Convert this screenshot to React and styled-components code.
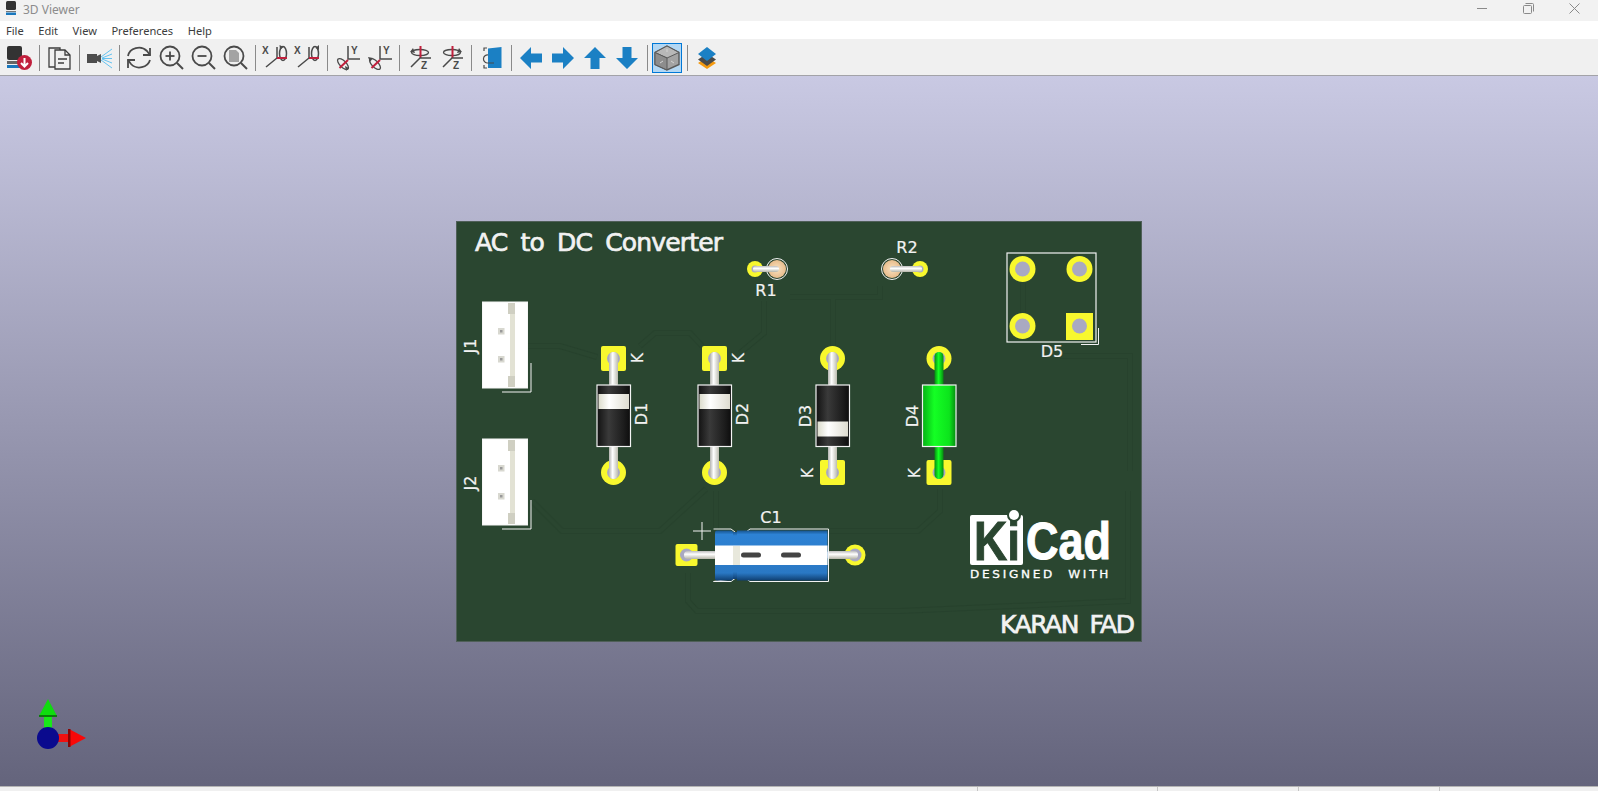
import styled, { createGlobalStyle } from 'styled-components';

const GlobalStyle = createGlobalStyle`
	html, body, #root {
		margin: 0;
		padding: 0;
		height: 100%;
		overflow: hidden;
	}
	body {
		font-family: 'Noto Sans', 'Open Sans', sans-serif;
	}
`;

const Window = styled.div`
	display: flex;
	flex-direction: column;
	width: 1598px;
	height: 791px;
	background: #f0f0f0;
`;

const TitleBar = styled.div`
	display: flex;
	align-items: flex-start;
	height: 21px;
	flex: none;
	background: #f2f2f2;
`;

const AppIcon = styled.svg`
	width: 14px;
	height: 16px;
	margin-left: 4px;
	flex: none;
`;

const TitleText = styled.span`
	margin-left: 5px;
	font-size: 12px;
	line-height: 20px;
	color: #8c8c8c;
`;

const WindowControls = styled.div`
	display: flex;
	margin-left: auto;
	margin-right: 1px;
`;

const WindowButton = styled.div`
	display: flex;
	align-items: center;
	justify-content: center;
	width: 46px;
	height: 16px;
`;

const MenuBar = styled.div`
	display: flex;
	align-items: center;
	gap: 14.5px;
	height: 18px;
	flex: none;
	padding-left: 6px;
	background: #fff;
`;

const MenuItem = styled.span`
	font-size: 11.1px;
	color: #3c3c3c;
`;

const Toolbar = styled.div`
	display: flex;
	align-items: center;
	height: 37px;
	flex: none;
	box-sizing: border-box;
	padding: 2px 0 0 3px;
	background: #f0f0f0;
	border-bottom: 1px solid #a3a3a8;
`;

const ToolButton = styled.div`
	display: flex;
	width: 30px;
	height: 30px;
	margin: 0 1px;
	flex: none;
	box-sizing: border-box;
	background: ${(p) => (p.$active ? '#b3d7f3' : 'transparent')};
	outline: ${(p) => (p.$active ? '1px solid #0078d7' : 'none')};
	outline-offset: -1px;
`;

const ToolIcon = styled.svg`
	width: 30px;
	height: 30px;
`;

const ToolSeparator = styled.div`
	width: 1px;
	height: 26px;
	margin: 0 3.5px;
	flex: none;
	background: #8a8a8a;
`;

const Canvas = styled.div`
	position: relative;
	display: flex;
	align-items: center;
	justify-content: center;
	flex: 1;
	background: linear-gradient(#c9c9e3, #64647c);
`;

const Board = styled.svg`
	display: block;
	width: 686px;
	height: 421px;
`;

const AxisGizmo = styled.svg`
	position: absolute;
	left: 30px;
	bottom: 37px;
	width: 60px;
	height: 54px;
`;

const StatusBar = styled.div`
	display: flex;
	justify-content: flex-end;
	height: 5px;
	flex: none;
	background: #f0f0f0;
	border-top: 1px solid #b4b4b4;
	box-sizing: border-box;
`;

const StatusCell = styled.div`
	width: ${(p) => p.$w}px;
	border-left: 1px solid #c4c4c4;
	flex: none;
`;

const INK = '#4a4a4a';
const BLUE = '#1b80c4';

const SaveIcon = () => (
	<ToolIcon viewBox='0 0 30 30'>
		<rect x='3' y='3' width='15' height='14' rx='2' fill='#333' />
		<rect x='3' y='18' width='15' height='3' fill='#666' />
		<rect x='3' y='22' width='17' height='3' fill='#1a78bd' />
		<circle cx='20.5' cy='19.5' r='7.5' fill='#c1203d' />
		<path d='M20.5 15v8M17 20l3.5 3.5 3.5-3.5' stroke='#fff' strokeWidth='2' fill='none' />
	</ToolIcon>
);

const CopyIcon = () => (
	<ToolIcon viewBox='0 0 30 30'>
		<path d='M11 24H5V5h11v3' fill='none' stroke='#3e3e3e' strokeWidth='1.3' />
		<path d='M11 7h10l5 5v14H11z' fill='#f0f0f0' stroke='#3e3e3e' strokeWidth='1.3' />
		<path d='M21 7v5h5M14 16h9M14 20h6' fill='none' stroke='#3e3e3e' strokeWidth='1.3' />
	</ToolIcon>
);

const CameraIcon = () => (
	<ToolIcon viewBox='0 0 30 30'>
		<rect x='3' y='11' width='10' height='9' fill='#4d4d4d' />
		<path d='M13 13l4-2v9l-4-2z' fill='#4d4d4d' />
		<path d='M17 14L28 6M18 15L28 11M18 15.500h10M18 16l10 4M17 17l11 8' stroke='#55bdf0' strokeWidth='0.9' fill='none' />
	</ToolIcon>
);

const RefreshIcon = () => (
	<ToolIcon viewBox='0 0 30 30'>
		<path d='M4 13a11 10 0 0 1 19-5l3 4M4 17l3 4a11 10 0 0 0 19-4' fill='none' stroke={INK} strokeWidth='1.8' />
		<path d='M26 5v7h-7M4 25v-8h7' fill='none' stroke={INK} strokeWidth='1.8' />
	</ToolIcon>
);

const ZoomIcon = ({ mode }) => (
	<ToolIcon viewBox='0 0 30 30'>
		<circle cx='14' cy='13' r='9.5' fill='none' stroke={INK} strokeWidth='1.8' />
		<path d='M21 20l6 6' stroke={INK} strokeWidth='2' />
		{mode !== 'fit' && <path d='M9.5 13h9' stroke={INK} strokeWidth='1.8' />}
		{mode === 'in' && <path d='M14 8.5v9' stroke={INK} strokeWidth='1.8' />}
		{mode === 'fit' && <path d='M9 7h7l3 3v9H9z' fill='#a3a3a3' />}
	</ToolIcon>
);

const AxisLetter = ({ x, y, children }) => (
	<text x={x} y={y} fontFamily='Liberation Sans' fontWeight='700' fontSize='10' fill={INK}>
		{children}
	</text>
);

const RotateX = ({ flip }) => (
	<ToolIcon viewBox='0 0 30 30'>
		<AxisLetter x='2' y='11'>X</AxisLetter>
		<path d='M6 24l11-9V4' fill='none' stroke={INK} strokeWidth='1.5' />
		<ellipse cx='23' cy='10.500' rx='3.500' ry='7' fill='none' stroke={INK} strokeWidth='1.5' />
		<path d={flip ? 'M27 2v5l-3.500-2z' : 'M19.500 2l4 2-3.500 3z'} fill={INK} />
		<path d='M17 15h10' stroke='#c1203d' strokeWidth='2' />
	</ToolIcon>
);

const RotateY = ({ flip }) => (
	<ToolIcon viewBox='0 0 30 30'>
		<AxisLetter x='19' y='11'>Y</AxisLetter>
		<path d='M16 3v13h12' fill='none' stroke={INK} strokeWidth='1.5' />
		<ellipse cx='11' cy='21' rx='7' ry='3.200' transform='rotate(45 11 21)' fill='none' stroke={INK} strokeWidth='1.3' />
		<path d={flip ? 'M4 14l5 1-3 4z' : 'M14 28l-1-5 4 2z'} fill={INK} />
		<path d='M7.500 25l8.500-8' stroke='#c1203d' strokeWidth='2' />
	</ToolIcon>
);

const RotateZ = ({ flip }) => (
	<ToolIcon viewBox='0 0 30 30'>
		<ellipse cx='16' cy='9.500' rx='8.500' ry='3' fill='none' stroke={INK} strokeWidth='1.3' />
		<path d={flip ? 'M23 5l3 4-5 1z' : 'M9 5L6 9l5 1z'} fill={INK} />
		<path d='M16.500 3v12' stroke='#c1203d' strokeWidth='2' />
		<path d='M7 24l9-9h11' fill='none' stroke={INK} strokeWidth='1.5' />
		<AxisLetter x='17' y='26'>Z</AxisLetter>
	</ToolIcon>
);

const FlipIcon = () => (
	<ToolIcon viewBox='0 0 30 30'>
		<path d='M12 5.500l13.500-1.500v21H12z' fill={BLUE} />
		<path d='M11 5H8v3M8 22v3h3' fill='none' stroke={INK} strokeWidth='1.2' />
		<path d='M12 12a4 4 0 0 0-1 8h7' fill='none' stroke={INK} strokeWidth='1.2' />
	</ToolIcon>
);

const ArrowIcon = ({ angle }) => (
	<ToolIcon viewBox='0 0 30 30'>
		<polygon
			points='4,15 15,4 15,10.500 26,10.500 26,19.500 15,19.500 15,26'
			fill={BLUE}
			transform={`rotate(${angle} 15 15)`}
		/>
	</ToolIcon>
);

const CubeIcon = () => (
	<ToolIcon viewBox='0 0 30 30'>
		<path d='M15 3l12 6.500v12L15 27 3 21.500V9.500z' fill='#a3a3a3' stroke='#5a5a5a' strokeWidth='1.4' />
		<path d='M3 9.500L15 15l12-5.500L15 3z' fill='#b8b8b8' stroke='#5a5a5a' strokeWidth='1' />
		<path d='M15 15v12L3 21.500V9.500z' fill='#8d8d8d' stroke='#5a5a5a' strokeWidth='1' />
		<path d='M15 6v3M11 18l-3 2M19 18l3 2' stroke='#d4d4d4' strokeWidth='1' />
	</ToolIcon>
);

const LayersIcon = () => (
	<ToolIcon viewBox='0 0 30 30'>
		<path d='M15 14.500l9 5.500-9 6-9-6z' fill='#f59a10' />
		<path d='M15 10.500l9 6-9 6.500-9-6.500z' fill='#4a4a4a' />
		<path d='M15 4l9 7-9 7-9-7z' fill={BLUE} />
	</ToolIcon>
);

const toolbarGroups = [
	[<SaveIcon />],
	[<CopyIcon />],
	[<CameraIcon />],
	[<RefreshIcon />, <ZoomIcon mode='in' />, <ZoomIcon mode='out' />, <ZoomIcon mode='fit' />],
	[<RotateX />, <RotateX flip />],
	[<RotateY />, <RotateY flip />],
	[<RotateZ />, <RotateZ flip />],
	[<FlipIcon />],
	[<ArrowIcon angle={0} />, <ArrowIcon angle={180} />, <ArrowIcon angle={90} />, <ArrowIcon angle={270} />],
	[<CubeIcon />],
	[<LayersIcon />],
];

const PAD = '#f8f82e';
const HOLE = '#a9a9c2';
const SILK = '#f2f2f2';
const BOARD = '#2a4630';

const traces = [
	'M528 345L560 345L597 356',
	'M640 345L655 332H690L702 345',
	'M740 352L764 332V300',
	'M532 500L562 530H660L706 488',
	'M716 490V528',
	'M688 572V600L697 610H900L1128 600V490',
	'M940 488V510L918 530H830',
	'M1023 282V312',
	'M880 285V296H790',
	'M833 345V296',
	'M1060 355L1130 355V470',
];

const TraceLayer = () => (
	<g fill='none'>
		{traces.map((d) => (
			<path key={d} d={d} stroke='#27422d' strokeWidth='6' />
		))}
		{traces.map((d) => (
			<path key={d + 'in'} d={d} stroke={BOARD} strokeWidth='4' />
		))}
	</g>
);

const PadHole = ({ x, y, square, size = 25 }) => (
	<>
		{square ? (
			<rect x={x - size / 2} y={y - size / 2} width={size} height={size} rx='2' fill={PAD} />
		) : (
			<circle cx={x} cy={y} r={size / 2} fill={PAD} />
		)}
		<circle cx={x} cy={y} r='6.500' fill={HOLE} />
	</>
);

const Label = ({ x, y, size = 16, rotate, children }) => (
	<text
		x={x}
		y={y}
		fontFamily='DejaVu Sans'
		fontSize={size}
		fill={SILK}
		stroke={SILK}
		strokeWidth='0.2'
		textAnchor='middle'
		transform={rotate ? `rotate(-90 ${x} ${y})` : undefined}
	>
		{children}
	</text>
);

const BoardText = ({ x, y, width, gap, children }) => (
	<text
		x={x}
		y={y}
		fontFamily='DejaVu Sans'
		fontSize='25'
		fill={SILK}
		stroke={SILK}
		strokeWidth='0.7'
		textLength={width}
		wordSpacing={gap}
	>
		{children}
	</text>
);

const Diode = ({ x, kathodeTop, green, band }) => {
	const lead = green ? 'url(#greenLead)' : 'url(#lead)';
	const body = green ? 'url(#greenBody)' : 'url(#darkBody)';
	return (
		<g>
			<PadHole x={x} y={357.5} square={kathodeTop} />
			<PadHole x={x} y={471.5} square={!kathodeTop} />
			<rect x={x - 4.5} y={351} width='9' height='36' rx='4.5' fill={lead} />
			<rect x={x - 4.5} y={442} width='9' height='36' rx='4.5' fill={lead} />
			<rect x={x - 16.5} y='384' width='33.5' height='61.5' fill={body} stroke='#f4f4f4' strokeWidth='1.2' />
			{band && <rect x={x - 15} y={band} width='30.5' height='15' fill='url(#whiteBand)' />}
		</g>
	);
};

const Connector = ({ y }) => (
	<g>
		<rect x='482.500' y={y} width='45' height='86' fill='#fff' stroke='#f6f6f6' />
		<rect x='510' y={y + 4} width='5' height='78' fill='#e2e2d4' />
		<rect x='508' y={y + 1} width='7' height='11' fill='#cfcfc2' />
		<rect x='508' y={y + 74} width='7' height='11' fill='#cfcfc2' />
		<rect x='498' y={y + 26} width='6.500' height='6.500' fill='#d8d8d0' />
		<rect x='500' y={y + 28} width='2.500' height='2.500' fill='#999' />
		<rect x='498' y={y + 54} width='6.500' height='6.500' fill='#d8d8d0' />
		<rect x='500' y={y + 56} width='2.500' height='2.500' fill='#999' />
		<path d={`M502 ${y + 90}H531V${y + 61}`} fill='none' stroke={SILK} strokeWidth='1' />
	</g>
);

const Resistor = ({ padX, bodyX }) => (
	<g>
		<circle cx={padX} cy='268' r='8' fill={PAD} />
		<circle cx={padX} cy='268' r='3.500' fill={HOLE} />
		<circle cx={bodyX} cy='268' r='10.500' fill='none' stroke={SILK} strokeWidth='1' />
		<circle cx={bodyX} cy='268' r='9' fill='url(#tanBody)' />
		<rect
			x={Math.min(padX, bodyX) - 2}
			y='265'
			width={Math.abs(padX - bodyX) + 4}
			height='6'
			rx='3'
			fill='url(#hLead)'
		/>
	</g>
);

const Capacitor = () => (
	<g>
		<PadHole x={686.5} y={554} square size={22} />
		<PadHole x={855} y={554} size={21} />
		<rect x='684' y='550' width='34' height='8' rx='4' fill='url(#hLead)' />
		<rect x='826' y='550' width='32' height='8' rx='4' fill='url(#hLead)' />
		<path
			d='M713.500 528H731L735 531M746 531L750 528H828.500V580.500H750L746 577.500M735 577.500L731 580.500H713.500z'
			fill='none'
			stroke={SILK}
			strokeWidth='1'
		/>
		<rect x='715' y='529.500' width='18' height='50' rx='2' fill='url(#blueBody)' />
		<rect x='733' y='531' width='8' height='47' fill='url(#blueBody)' />
		<rect x='737' y='529.500' width='90.500' height='50' fill='url(#blueBody)' />
		<rect x='715' y='544.500' width='112.500' height='19.500' fill='#fff' />
		<rect x='733' y='545' width='7' height='19' fill='#e8e8dc' />
		<rect x='741' y='551.500' width='20' height='5' rx='2.500' fill='#444' />
		<rect x='781' y='551.500' width='20' height='5' rx='2.500' fill='#444' />
		<path d='M693 530h18M702 521v18' stroke={SILK} strokeWidth='1' />
	</g>
);

const KicadLogo = () => (
	<g>
		<rect x='970' y='514' width='53' height='50' rx='2' fill='#fff' />
		<text
			x='974'
			y='559'
			fontFamily='Liberation Sans'
			fontWeight='700'
			fontSize='55'
			fill={BOARD}
			stroke={BOARD}
			strokeWidth='1'
			textLength='46'
			lengthAdjust='spacingAndGlyphs'
		>
			Ki
		</text>
		<circle cx='1014' cy='514' r='7' fill={BOARD} />
		<circle cx='1014' cy='514' r='5' fill='#fff' />
		<text
			x='1026'
			y='558'
			fontFamily='Liberation Sans'
			fontWeight='700'
			fontSize='51'
			fill='#fff'
			stroke='#fff'
			strokeWidth='1'
			textLength='85'
			lengthAdjust='spacingAndGlyphs'
		>
			Cad
		</text>
		<text
			x='970'
			y='577'
			fontFamily='DejaVu Sans'
			fontSize='11'
			fill='#fff'
			stroke='#fff'
			strokeWidth='0.3'
			letterSpacing='2.500'
			wordSpacing='6'
			textLength='141'
			lengthAdjust='spacingAndGlyphs'
		>
			DESIGNED WITH
		</text>
	</g>
);

const PcbDrawing = () => (
	<Board viewBox='456 220 686 421'>
		<defs>
			<linearGradient id='darkBody' x1='0' x2='1' y1='0' y2='0'>
				<stop offset='0' stopColor='#111' />
				<stop offset='0.35' stopColor='#3a3a3a' />
				<stop offset='0.8' stopColor='#1c1c1c' />
				<stop offset='1' stopColor='#0c0c0c' />
			</linearGradient>
			<linearGradient id='greenBody' x1='0' x2='1' y1='0' y2='0'>
				<stop offset='0' stopColor='#06b015' />
				<stop offset='0.35' stopColor='#14ff24' />
				<stop offset='0.8' stopColor='#0ce41c' />
				<stop offset='1' stopColor='#068a10' />
			</linearGradient>
			<linearGradient id='whiteBand' x1='0' x2='1' y1='0' y2='0'>
				<stop offset='0' stopColor='#dcdccc' />
				<stop offset='0.35' stopColor='#ffffff' />
				<stop offset='1' stopColor='#dedcd0' />
			</linearGradient>
			<linearGradient id='lead' x1='0' x2='1' y1='0' y2='0'>
				<stop offset='0' stopColor='#b4b4b0' />
				<stop offset='0.4' stopColor='#ffffff' />
				<stop offset='1' stopColor='#bcbcb0' />
			</linearGradient>
			<linearGradient id='greenLead' x1='0' x2='1' y1='0' y2='0'>
				<stop offset='0' stopColor='#058a10' />
				<stop offset='0.45' stopColor='#14ff24' />
				<stop offset='1' stopColor='#058a10' />
			</linearGradient>
			<linearGradient id='hLead' x1='0' x2='0' y1='0' y2='1'>
				<stop offset='0' stopColor='#bcbcbc' />
				<stop offset='0.4' stopColor='#ffffff' />
				<stop offset='1' stopColor='#b4b4a8' />
			</linearGradient>
			<linearGradient id='blueBody' x1='0' x2='0' y1='0' y2='1'>
				<stop offset='0' stopColor='#17548f' />
				<stop offset='0.08' stopColor='#2d82d4' />
				<stop offset='0.85' stopColor='#2a78c4' />
				<stop offset='1' stopColor='#0f3f72' />
			</linearGradient>
			<radialGradient id='tanBody'>
				<stop offset='0' stopColor='#f9e2c0' />
				<stop offset='1' stopColor='#e8bc8c' />
			</radialGradient>
		</defs>

		<rect x='456.500' y='220.500' width='685' height='420' fill={BOARD} stroke='#4f5f58' strokeWidth='1' />
		<TraceLayer />

		<BoardText x={475} y={250} width={248} gap={6}>AC to DC Converter</BoardText>
		<BoardText x={1000} y={632} width={135} gap={5}>KARAN FAD</BoardText>

		<Resistor padX={755} bodyX={777} />
		<Label x={766} y={295}>R1</Label>
		<Resistor padX={920} bodyX={892} />
		<Label x={907} y={252}>R2</Label>

		<Connector y={301} />
		<Label x={476} y={345} rotate>J1</Label>
		<Connector y={438} />
		<Label x={476} y={482} rotate>J2</Label>

		<Diode x={613.5} kathodeTop band={393} />
		<Label x={647} y={413} rotate>D1</Label>
		<Label x={643} y={357} size={15} rotate>K</Label>
		<Diode x={714.5} kathodeTop band={393} />
		<Label x={748} y={413} rotate>D2</Label>
		<Label x={744} y={357} size={15} rotate>K</Label>
		<Diode x={832.5} band={420.5} />
		<Label x={811} y={415} rotate>D3</Label>
		<Label x={813} y={472} size={15} rotate>K</Label>
		<Diode x={939} green />
		<Label x={918} y={415} rotate>D4</Label>
		<Label x={920} y={472} size={15} rotate>K</Label>

		<rect x='1007' y='252' width='89' height='89' fill='none' stroke={SILK} strokeWidth='1.2' />
		<path d='M1081 343.500h17.500V327' fill='none' stroke={SILK} strokeWidth='1' />
		<g>
			<circle cx='1022.500' cy='268' r='13' fill={PAD} />
			<circle cx='1079.500' cy='268' r='13' fill={PAD} />
			<circle cx='1022.500' cy='325' r='13' fill={PAD} />
			<rect x='1066' y='312' width='27' height='27' fill={PAD} />
			<circle cx='1022.500' cy='268' r='7.500' fill={HOLE} />
			<circle cx='1079.500' cy='268' r='7.500' fill={HOLE} />
			<circle cx='1022.500' cy='325' r='7.500' fill={HOLE} />
			<circle cx='1079.500' cy='325' r='7.500' fill={HOLE} />
		</g>
		<Label x={1052} y={356}>D5</Label>

		<Capacitor />
		<Label x={771} y={522}>C1</Label>

		<KicadLogo />
	</Board>
);

const App = () => (
	<>
		<GlobalStyle />
		<Window>
			<TitleBar>
				<AppIcon viewBox='0 0 14 16'>
					<rect x='2' y='1' width='10' height='9' rx='1.5' fill='#333' />
					<rect x='2' y='11' width='10' height='1' fill='#777' />
					<rect x='2' y='12.500' width='10' height='2.500' fill='#1a78bd' />
				</AppIcon>
				<TitleText>3D Viewer</TitleText>
				<WindowControls>
					<WindowButton>
						<svg width='10' height='10'>
							<path d='M0 5.500h10' stroke='#8a8a8a' />
						</svg>
					</WindowButton>
					<WindowButton>
						<svg width='11' height='11'>
							<rect x='.5' y='2.500' width='8' height='8' rx='1' fill='none' stroke='#8a8a8a' />
							<path d='M2.500 .5h7a1 1 0 0 1 1 1v7' fill='none' stroke='#8a8a8a' />
						</svg>
					</WindowButton>
					<WindowButton>
						<svg width='11' height='11'>
							<path d='M.5.5l10 10M10.500.5l-10 10' stroke='#8a8a8a' />
						</svg>
					</WindowButton>
				</WindowControls>
			</TitleBar>
			<MenuBar>
				{['File', 'Edit', 'View', 'Preferences', 'Help'].map((item) => (
					<MenuItem key={item}>{item}</MenuItem>
				))}
			</MenuBar>
			<Toolbar>
				{toolbarGroups.map((group, i) => (
					<div key={i} style={{ display: 'contents' }}>
						{i > 0 && <ToolSeparator />}
						{group.map((icon, j) => (
							<ToolButton key={j} $active={i === 9}>
								{icon}
							</ToolButton>
						))}
					</div>
				))}
			</Toolbar>
			<Canvas>
				<PcbDrawing />
				<AxisGizmo viewBox='30 695 60 54'>
					<rect x='44' y='714' width='8' height='18' fill='#18e818' />
					<path d='M48 699l9 17H39z' fill='#0fdc0f' />
					<rect x='39' y='715' width='18' height='2' fill='#0a7a0a' />
					<rect x='52' y='734' width='19' height='8' fill='#f01010' />
					<path d='M86 738l-17 9v-18z' fill='#f80808' />
					<rect x='68' y='729' width='2.500' height='18' fill='#8a0505' />
					<circle cx='48' cy='738' r='11' fill='#0a0a8e' />
				</AxisGizmo>
			</Canvas>
			<StatusBar>
				<StatusCell $w={179} />
				<StatusCell $w={140} />
				<StatusCell $w={140} />
				<StatusCell $w={158} />
			</StatusBar>
		</Window>
	</>
);

export default App;
